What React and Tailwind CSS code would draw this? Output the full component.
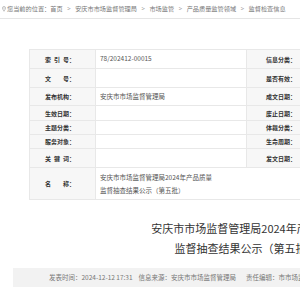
import { Fragment } from "react";

const FONT = "font-['Microsoft_YaHei','Noto_Sans_CJK_SC',sans-serif]";

const ROWS = [
    { left: "索引号", value: "78/202412-00015", right: "信息分类", h: "h-[19px]" },
    { left: "文号", value: "", right: "是否有效", h: "h-[19px]" },
    { left: "发布机构", value: "安庆市市场监督管理局", right: "成文日期", h: "h-[18px]" },
    { left: "生效日期", value: "", right: "废止日期", h: "h-[15px]" },
    { left: "主题分类", value: "", right: "体裁分类", h: "h-[14px]" },
    { left: "服务对象", value: "", right: "生命周期", h: "h-[14px]" },
    { left: "关键词", value: "", right: "发文日期", h: "h-[19px]" },
];

const CRUMBS = ["首页", "安庆市市场监督管理局", "市场监管", "产品质量监管领域", "监督检查信息"];

function Label({ text }) {
    // spread the characters over a fixed box, like the justified labels of the site
    return (
        <span className="flex items-center">
            <span className="flex justify-between w-[24px]">
                {text.split("").map((c, i) => (
                    <span key={i}>{c}</span>
                ))}
            </span>
            <span>：</span>
        </span>
    );
}

function LabelCell({ text, width }) {
    return (
        <div className={`${width} shrink-0 h-full flex items-center justify-end pr-[20px] bg-[#f7f7f7] border-r border-[#e8e8e8] text-[6px] font-bold text-[#333]`}>
            <Label text={text} />
        </div>
    );
}

export default function App() {
    return (
        <div className={`w-[300px] h-[300px] overflow-hidden bg-white ${FONT}`}>
            {/* BREADCRUMB */}
            <div className="flex items-center h-[19px] border-b border-[#e5e5e5] pl-[2px] text-[6.2px] text-[#777] whitespace-nowrap">
                <svg width="4" height="6" viewBox="0 0 8 12" className="shrink-0 mr-[1px]">
                    <path d="M4 1a3 3 0 0 0-3 3c0 2.2 3 6.5 3 6.5S7 6.2 7 4a3 3 0 0 0-3-3z" fill="none" stroke="#999" strokeWidth="1.2" />
                    <circle cx="4" cy="4" r="1" fill="#999" />
                </svg>
                <span>您当前的位置：</span>
                {CRUMBS.map((c, i) => (
                    <Fragment key={i}>
                        {i > 0 && <span className="mx-[4.5px]">&gt;</span>}
                        <span>{c}</span>
                    </Fragment>
                ))}
            </div>

            {/* CONTENT */}
            <div className="w-[466px] ml-[13px]">
                {/* INFO TABLE */}
                <div className="mt-[30px] ml-[16px] w-[434px] border-t border-l border-[#e8e8e8]">
                    {ROWS.map((row, i) => (
                        <div key={i} className={`flex items-center ${row.h} border-b border-[#e8e8e8]`}>
                            <LabelCell text={row.left} width="w-[66px]" />
                            <div className="w-[151px] shrink-0 h-full flex items-center pl-[4px] border-r border-[#e8e8e8] text-[6.5px] text-[#555] whitespace-nowrap">
                                {row.value}
                            </div>
                            <LabelCell text={row.right} width="w-[70px]" />
                            <div className="flex-1 h-full" />
                        </div>
                    ))}
                    <div className="flex items-center h-[32px] border-b border-[#e8e8e8]">
                        <LabelCell text="名称" width="w-[66px]" />
                        <div className="flex-1 pl-[4px] text-[6.5px] leading-[13px] text-[#555] whitespace-nowrap">
                            安庆市市场监督管理局2024年产品质量
                            <br />
                            监督抽查结果公示（第五批）
                        </div>
                    </div>
                </div>

                {/* TITLE */}
                <h1 className="mt-[18px] text-center text-[11px] leading-[20px] text-[#333] whitespace-nowrap">
                    安庆市市场监督管理局2024年产品质量
                    <br />
                    监督抽查结果公示（第五批）
                </h1>

                {/* META */}
                <div className="mt-[10px] h-[19px] flex items-center pl-[36px] bg-[#f2f2f2] text-[6.5px] text-[#777] whitespace-nowrap">
                    <span>发表时间：2024-12-12 17:31</span>
                    <span className="ml-[6px]">信息来源：安庆市市场监督管理局</span>
                    <span className="ml-[10px]">责任编辑：市市场监督管理局</span>
                </div>
            </div>
        </div>
    );
}
